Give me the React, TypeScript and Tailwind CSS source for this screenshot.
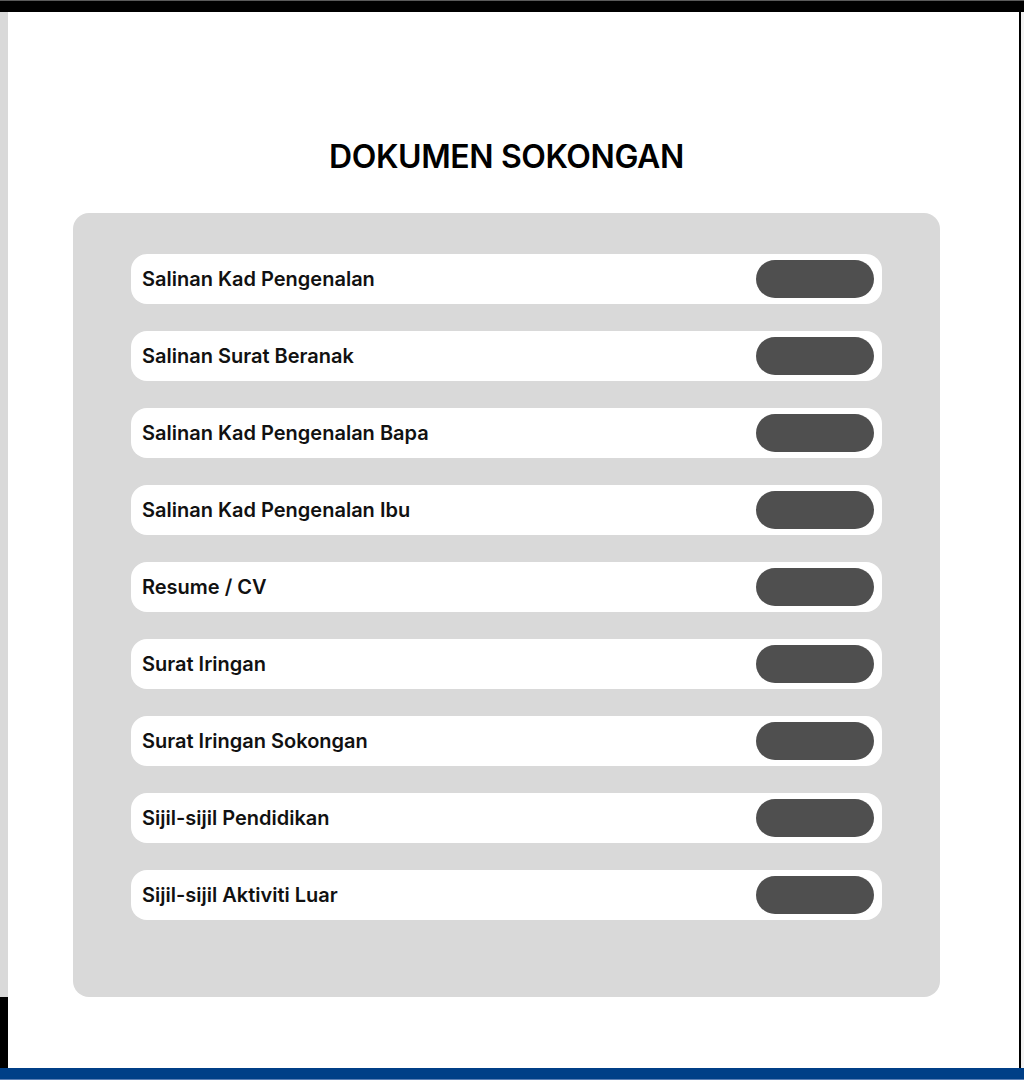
const documents = [
  'Salinan Kad Pengenalan',
  'Salinan Surat Beranak',
  'Salinan Kad Pengenalan Bapa',
  'Salinan Kad Pengenalan Ibu',
  'Resume / CV',
  'Surat Iringan',
  'Surat Iringan Sokongan',
  'Sijil-sijil Pendidikan',
  'Sijil-sijil Aktiviti Luar',
];

function DocumentRow({ label }: { label: string }) {
  return (
    <div className="flex h-[50px] items-center justify-between rounded-[16px] bg-white pl-[11px] pr-[8px]">
      <span className="text-[20px] font-semibold text-[#111]">{label}</span>
      <button className="h-[38px] w-[118px] rounded-full bg-[#4f4f4f]" aria-label={`Muat naik ${label}`} />
    </div>
  );
}

export default function App() {
  return (
    <div
      className="flex h-[1080px] w-[1024px] flex-col overflow-hidden bg-white"
      style={{ fontFamily: 'Inter, "Noto Sans", sans-serif' }}
    >
      {/* window chrome top */}
      <div className="h-px bg-[#5a5a5a]" />
      <div className="h-[11px] bg-black" />

      <div className="flex flex-1">
        {/* left edge strip */}
        <div className="flex w-[8px] flex-col">
          <div className="h-[985px] bg-[#d9d9d9]" />
          <div className="flex-1 bg-black" />
        </div>

        <main className="w-[1011px] bg-white">
          <div className="ml-[65px] w-[867px]">
            <h1 className="mt-[125px] text-center text-[32px] leading-[39px] font-semibold tracking-[-0.4px] text-black">
              DOKUMEN SOKONGAN
            </h1>

            <section className="mt-[37px] flex flex-col gap-[27px] rounded-[16px] bg-[#d9d9d9] px-[58px] pt-[41px] pb-[77px]">
              {documents.map((doc) => (
                <DocumentRow key={doc} label={doc} />
              ))}
            </section>
          </div>
        </main>

        <div className="w-[2px] bg-black" />
        <div className="flex-1 bg-[#f2f2f2]" />
      </div>

      {/* taskbar strip */}
      <div className="h-[11px] bg-[#003f87]" />
      <div className="h-px bg-[#5b7fb5]" />
    </div>
  );
}
